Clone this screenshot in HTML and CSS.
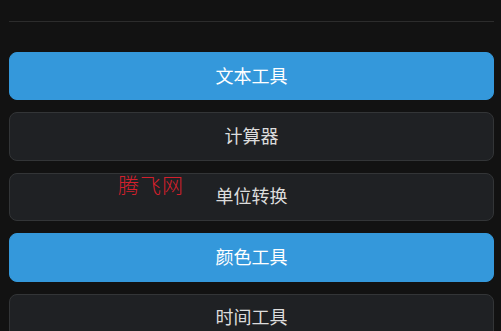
FILE: index.html
```html
<!DOCTYPE html>
<html lang="zh-CN">
<head>
    <meta charset="UTF-8">
    <meta name="viewport" content="width=device-width, initial-scale=1.0">
    <title>工具箱</title>
    <link rel="stylesheet" href="styles.css">
</head>
<body>
    <div class="page">
        <hr class="divider">
        <div class="tool-list">
            <button class="tool-btn active">文本工具</button>
            <button class="tool-btn">计算器</button>
            <button class="tool-btn">单位转换</button>
            <button class="tool-btn active">颜色工具</button>
            <button class="tool-btn">时间工具</button>
        </div>
        <span class="watermark">腾飞网</span>
    </div>
</body>
</html>
```

FILE: styles.css
```css
html, body {
    margin: 0;
    padding: 0;
    background-color: #121212;
    font-family: "Noto Sans CJK SC", "Noto Sans", sans-serif;
}
.page {
    position: relative;
    padding: 21px 7px 0 9px;
}
.divider {
    margin: 0;
    border: none;
    border-top: 1px solid #2c2c2c;
}
.tool-list {
    display: flex;
    flex-direction: column;
    gap: 12px;
    margin-top: 30px;
}
.tool-btn {
    display: block;
    width: 100%;
    height: 48.4px;
    padding: 0 0 3px;
    line-height: 1;
    border: 1px solid #333537;
    border-radius: 8px;
    background-color: #1f2124;
    color: #dcdcdc;
    font-family: inherit;
    font-size: 18px;
    cursor: pointer;
}
.tool-btn.active {
    background-color: #3498db;
    border-color: #3498db;
    color: #ffffff;
}
.watermark {
    position: absolute;
    left: 118px;
    top: 169px;
    color: #d4202c;
    font-size: 21px;
    font-weight: 300;
    letter-spacing: 1px;
}
```
